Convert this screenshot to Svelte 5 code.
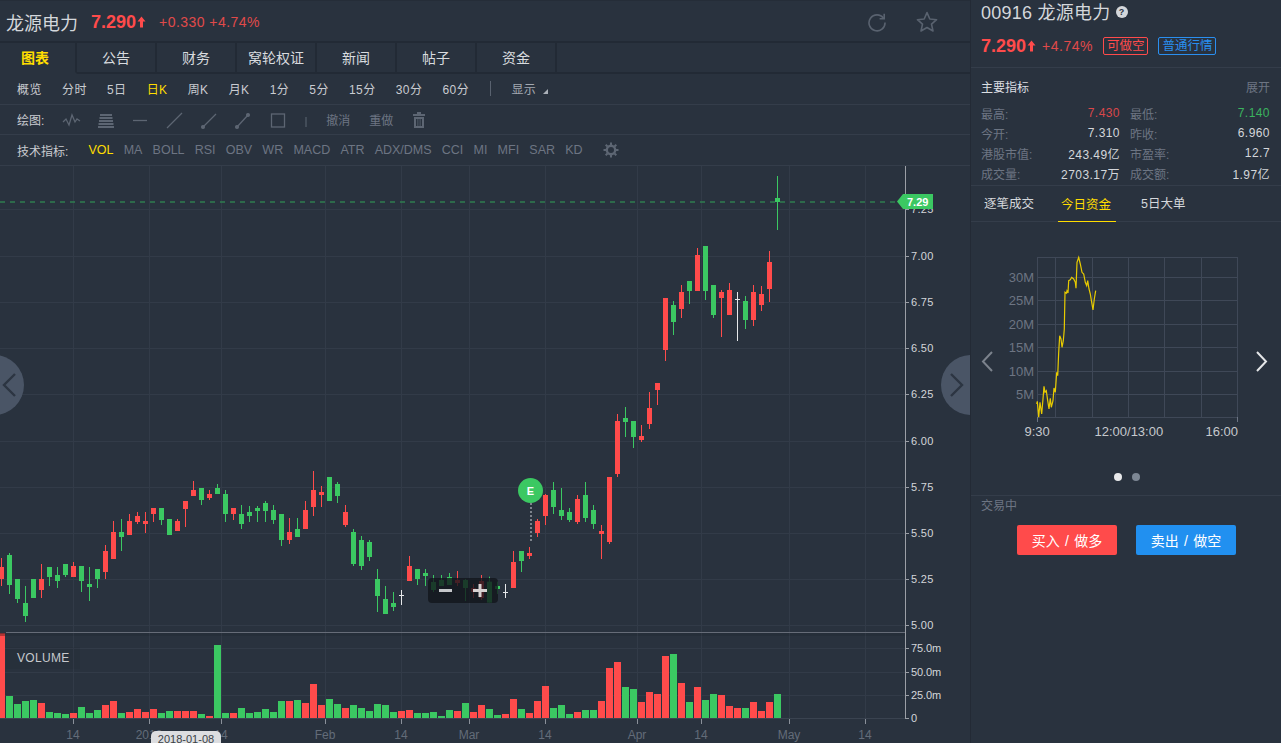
<script lang="ts">
	type Candle = [number, number, number, number, string];

	// high, open/close top, open/close bottom, low, read off the chart in 1/3 px
	const rawA = [
		[354,381,417,438,'r'],[339,345,435,462,'g'],[417,417,477,489,'g'],[438,489,528,546,'g'],[417,417,474,474,'g'],
		[372,417,450,474,'r'],[381,381,411,438,'g'],[381,405,423,444,'g'],[372,372,405,411,'g'],[366,378,411,411,'r'],
		[378,378,423,456,'g'],[381,432,441,483,'g'],[387,387,417,444,'g'],[315,333,396,417,'r'],[243,276,357,357,'r'],
		[237,276,291,333,'g'],[222,243,285,285,'r'],[216,228,246,252,'r'],[216,243,252,279,'r'],[204,204,222,246,'r'],
		[204,204,240,255,'g'],[237,237,285,285,'g'],[237,243,273,273,'r'],[183,183,207,261,'r'],[123,150,168,168,'r'],
		[144,144,180,195,'g'],[150,162,174,180,'r'],[132,144,162,162,'g'],[150,162,222,246,'g'],[204,204,222,240,'r'],
		[195,222,252,267,'g'],[198,216,228,246,'g'],[198,204,213,246,'g'],[183,189,213,246,'g'],[195,210,240,252,'g'],
		[222,222,300,318,'g'],[234,276,300,312,'r'],[234,267,291,291,'g'],[183,210,267,267,'r'],[93,150,201,228,'r'],
		[138,156,165,201,'r'],[111,111,183,183,'g'],[126,132,168,189,'g'],[195,216,255,261,'r'],[267,276,372,378,'g'],
		[288,300,378,390,'g'],[300,306,351,363,'g'],[387,417,468,516,'g'],[438,477,522,522,'g'],[456,489,501,513,'g'],
		[450,465,466,495,'w'],[348,378,423,423,'r'],[387,387,417,435,'g'],[387,399,408,438,'g'],[405,426,450,456,'g'],
		[405,420,438,438,'g'],[399,411,435,435,'g'],[393,420,429,438,'r'],[417,420,444,483,'g'],[432,444,456,474,'r'],
		[405,423,474,480,'r']
	];
	const rawB = [
		[560,575,638,638,'g'],[575,588,597,612,'g'],[582,606,607,624,'w'],[483,516,594,594,'r'],[483,483,513,546,'g'],
		[471,489,498,507,'r'],[387,393,429,441,'r'],[312,315,378,405,'r'],[276,300,351,372,'g'],[294,360,378,390,'g'],
		[354,366,390,396,'g'],[315,327,396,402,'r'],[276,315,384,396,'g'],[345,360,402,417,'g'],[405,423,432,507,'r'],
		[261,261,456,462,'r'],[72,93,252,261,'r'],[51,84,96,141,'g'],[93,93,141,174,'g'],[105,138,150,156,'r'],
		[6,54,102,117,'r'],[-21,-21,0,45,'r']
	];
	const rawC = [
		[384,384,540,573,'r'],[393,405,456,495,'g'],[345,366,417,444,'r'],[333,333,363,402,'g'],[234,255,363,363,'r'],
		[228,228,363,390,'g'],[345,345,435,444,'g'],[360,366,384,501,'r'],[339,360,435,435,'r'],[366,387,388,513,'w'],
		[378,393,450,477,'g'],[345,366,450,468,'r'],[348,372,405,423,'r'],[243,276,357,396,'r'],[18,84,96,180,'g']
	];

	const toPx = (rows: any[], base: number): Candle[] =>
		rows.map((r) => [base + r[0] / 3, base + r[1] / 3, base + r[2] / 3, base + r[3] / 3, r[4]]);
	const candles = [...toPx(rawA, 440), ...toPx(rawB, 390), ...toPx(rawC, 170)];

	// bar tops, same units, 0 = y 625
	const volumes: [number, string][] = [
		[25,'r'],[213,'g'],[237,'g'],[228,'g'],[225,'g'],[234,'r'],[261,'g'],[264,'g'],[267,'g'],[264,'r'],
		[246,'g'],[264,'g'],[255,'g'],[240,'r'],[228,'r'],[264,'g'],[261,'r'],[252,'r'],[261,'r'],[252,'r'],
		[264,'g'],[258,'g'],[258,'r'],[258,'r'],[258,'r'],[267,'g'],[273,'r'],[60,'g'],[264,'g'],[264,'r'],
		[249,'g'],[264,'g'],[261,'g'],[252,'g'],[261,'g'],[228,'g'],[228,'r'],[225,'g'],[234,'r'],[177,'r'],
		[240,'r'],[222,'g'],[237,'g'],[249,'r'],[240,'g'],[249,'g'],[258,'g'],[237,'g'],[240,'g'],[261,'g'],
		[258,'r'],[255,'r'],[264,'g'],[264,'g'],[261,'g'],[273,'g'],[255,'g'],[258,'r'],[234,'g'],[261,'r'],
		[240,'r'],[252,'g'],[270,'g'],[267,'r'],[222,'r'],[252,'g'],[264,'r'],[228,'r'],[183,'r'],[249,'g'],
		[240,'g'],[267,'g'],[261,'r'],[255,'g'],[255,'g'],[228,'r'],[129,'r'],[111,'r'],[186,'g'],[192,'g'],
		[231,'r'],[201,'r'],[207,'r'],[93,'r'],[87,'g'],[174,'r'],[231,'g'],[186,'r'],[225,'g'],[207,'g'],
		[210,'r'],[243,'r'],[249,'r'],[249,'g'],[231,'r'],[258,'r'],[231,'r'],[207,'g']
	];

	const colors: Record<string, string> = { r: '#ff4b4b', g: '#3bc862', w: '#e6e8ea' };

	const gridX = [73, 149, 221, 325, 401, 469, 545, 637, 701, 789, 865];
	const prices = [
		['7.25', 209], ['7.00', 256], ['6.75', 302], ['6.50', 348], ['6.25', 394],
		['6.00', 441], ['5.75', 487], ['5.50', 533], ['5.25', 579], ['5.00', 625]
	] as const;
	const volumeAxis = [['75.0m', 648], ['50.0m', 672], ['25.0m', 695], ['0', 718]] as const;
	const dates = [
		['14', 73], ['2018', 149], ['14', 221], ['Feb', 325], ['14', 401], ['Mar', 469],
		['14', 545], ['Apr', 637], ['14', 701], ['May', 789], ['14', 865]
	] as const;

	const tabs = ['图表', '公告', '财务', '窝轮权证', '新闻', '帖子', '资金'];
	const periods = ['概览', '分时', '5日', '日K', '周K', '月K', '1分', '5分', '15分', '30分', '60分'];
	const indicators = ['VOL', 'MA', 'BOLL', 'RSI', 'OBV', 'WR', 'MACD', 'ATR', 'ADX/DMS', 'CCI', 'MI', 'MFI', 'SAR', 'KD'];

	const stats = [
		['最高:', '7.430', 'up', '最低:', '7.140', 'down'],
		['今开:', '7.310', '', '昨收:', '6.960', ''],
		['港股市值:', '243.49亿', '', '市盈率:', '12.7', ''],
		['成交量:', '2703.17万', '', '成交额:', '1.97亿', '']
	];

	const flowY = [278, 301, 325, 348, 372, 395];
	const flowX = [1054, 1091, 1127, 1163, 1200];
	const flowLabels = [['30M', 278], ['25M', 301], ['20M', 325], ['15M', 348], ['10M', 372], ['5M', 395]] as const;
	const flowRaw = [
		[197,495],[199,487],[203,535],[207,490],[212,525],[216,480],[219,442],[222,460],[226,455],[230,485],[234,510],
		[238,478],[241,505],[246,485],[249,447],[253,460],[257,400],[260,410],[263,340],[266,290],[270,300],[273,325],
		[277,305],[280,270],[282,160],[286,163],[288,155],[291,162],[293,125],[298,122],[302,115],[308,120],[313,130],
		[315,148],[318,70],[323,55],[328,75],[333,100],[338,105],[343,130],[347,140],[350,125],[354,150],[358,165],
		[362,190],[366,213],[370,180],[374,155]
	];
	const flowPath = flowRaw.map(([x, y]) => `${(970 + x / 3).toFixed(1)},${(240 + y / 3).toFixed(1)}`).join(' ');
</script>

{#snippet upArrow()}
	<svg class="arrow" width="9" height="12" viewBox="0 0 9 12"><path d="M4.5 0.5 8.5 5.5H6V11.5H3V5.5H0.5Z" fill="#ff4b4b" /></svg>
{/snippet}

<div class="page">
	<section class="main">
		<header class="head">
			<span class="name">龙源电力</span>
			<span class="price">7.290</span>
			{@render upArrow()}
			<span class="change">+0.330 +4.74%</span>
			<div class="head-tools">
				<svg width="20" height="20" viewBox="0 0 20 20" fill="none" stroke="#59626f" stroke-width="1.6">
					<path d="M16.5 6.2A8 8 0 1 0 18 10.5" />
					<path d="M17.2 1.8V6.8H12.6" />
				</svg>
				<svg width="22" height="22" viewBox="0 0 22 22" fill="none" stroke="#59626f" stroke-width="1.6">
					<path d="M11 1.6 13.8 8 20.6 8.7 15.5 13.2 17 20 11 16.5 5 20 6.5 13.2 1.4 8.7 8.2 8Z" stroke-linejoin="round" />
				</svg>
			</div>
		</header>

		<nav class="tabs">
			{#each tabs as tab, i}
				<div class="tab" class:active={i === 0}>{tab}</div>
			{/each}
			<div class="tab-rest"></div>
		</nav>

		<div class="bar periods">
			{#each periods as p}
				<span class:on={p === '日K'}>{p}</span>
			{/each}
			<i class="vsep"></i>
			<span class="show">显示</span>
			<svg class="corner" width="5" height="5" viewBox="0 0 5 5"><path d="M5 0V5H0Z" fill="#aab0b8" /></svg>
		</div>

		<div class="bar draw">
			<span class="bar-label">绘图:</span>
			<svg class="tools" width="250" height="20" viewBox="0 0 250 20" fill="none" stroke="#5d6673" stroke-width="1.3">
				<path d="M1 12 4 9 7 15 10 5 13 12 15 9 18 11" />
				<path d="M38 5H50M37.5 8H50.5M37 11H51M36.5 14H51.5M36 17H52" stroke-width="1.8" />
				<path d="M71 10.5H85" />
				<path d="M105 18 120 3" />
				<path d="M141 17 154 4" /><circle cx="141" cy="17" r="1.4" fill="#5d6673" />
				<path d="M175 17 186 5" /><circle cx="175" cy="17" r="1.4" fill="#5d6673" /><circle cx="186" cy="5" r="1.4" fill="#5d6673" />
				<rect x="209.5" y="4" width="13" height="13" />
				<path d="M244 7V17" stroke-width="1" />
			</svg>
			<span class="muted-btn undo">撤消</span>
			<span class="muted-btn">重做</span>
			<svg class="trash" width="12" height="16" viewBox="0 0 12 16" fill="#5d6673">
				<path d="M4 0H8V2H12V4H0V2H4ZM1 5H11V16H1ZM3 7V14H4.5V7ZM5.3 7V14H6.7V7ZM7.5 7V14H9V7Z" fill-rule="evenodd" />
			</svg>
		</div>

		<div class="bar inds">
			<span class="bar-label">技术指标:</span>
			{#each indicators as ind}
				<span class="ind" class:on={ind === 'VOL'}>{ind}</span>
			{/each}
			<svg class="gear" width="16" height="16" viewBox="0 0 16 16" fill="none" stroke="#5d6673">
				<circle cx="8" cy="8" r="4.2" stroke-width="2.4" />
				<path d="M8 0.5V3M8 13V15.5M0.5 8H3M13 8H15.5M2.7 2.7 4.5 4.5M11.5 11.5 13.3 13.3M13.3 2.7 11.5 4.5M4.5 11.5 2.7 13.3" stroke-width="2" />
			</svg>
		</div>

		<svg class="chart" width="970" height="577" viewBox="0 166 970 577">
			{#each prices as [, y]}
				<rect x="0" y={y} width="905" height="1" fill="#323b48" />
			{/each}
			{#each [648, 672, 695] as y}
				<rect x="0" y={y} width="905" height="1" fill="#323b48" />
			{/each}
			{#each gridX as x}
				<rect x={x} y="166" width="1" height="552" fill="#323b48" />
				<rect x={x} y="719" width="1" height="5" fill="#8a909a" />
			{/each}

			<rect x="0" y="633" width="905" height="3" fill="#000" opacity="0.08" />
			<rect x="6" y="632" width="899" height="1" fill="#666c78" />
			<rect x="0" y="718" width="905" height="1" fill="#3a4350" />

			<line x1="0" y1="202" x2="897" y2="202" stroke="#2f7d50" stroke-width="1.5" stroke-dasharray="5 5" />

			{#each candles as [hi, top, bot, lo, c], i}
				<rect x={1 + 8 * i} y={hi} width="1" height={lo - hi} fill={colors[c]} />
				<rect x={-1 + 8 * i} y={top} width="5" height={Math.max(bot - top, 1)} fill={colors[c]} />
			{/each}

			{#each volumes as [top, c], i}
				<rect x={-2 + 8 * i} y={625 + top / 3} width="7" height={93 - top / 3} fill={colors[c]} />
			{/each}
			<rect x="0" y="633" width="5" height="3" fill="#000" opacity="0.3" />

			<rect x="6" y="647" width="74" height="22" fill="#000" opacity="0.04" />
			<text class="vol-label" x="17" y="662">VOLUME</text>

			<line x1="531" y1="503" x2="531" y2="543" stroke="#7d838c" stroke-width="2" stroke-dasharray="2 2" />
			<circle cx="530.5" cy="490.5" r="12.5" fill="#3bc862" />
			<text class="e-mark" x="530.5" y="494.5">E</text>

			<rect x="428" y="578" width="70" height="25" rx="4" fill="#11151b" opacity="0.78" />
			<rect x="439" y="589" width="13" height="3" fill="#c4c6c9" />
			<rect x="473" y="589" width="14" height="3" fill="#d8d2d2" />
			<rect x="478.5" y="584" width="3" height="13" fill="#d8d2d2" />

			<rect x="905" y="166" width="1" height="553" fill="#9b9fa6" />
			{#each prices as [label, y]}
				<rect x="905" y={y} width="4" height="1" fill="#9b9fa6" />
				<text class="axis" x="911" y={y + 4}>{label}</text>
			{/each}
			{#each volumeAxis as [label, y]}
				<rect x="905" y={y} width="4" height="1" fill="#9b9fa6" />
				<text class="axis vol" x="911" y={y + 4}>{label}</text>
			{/each}

			<path d="M897 201.5 903 194H933V209H903Z" fill="#3bc862" />
			<text class="tag" x="907" y="206">7.29</text>

			{#each dates as [label, x]}
				<text class="date" x={x} y="739">{label}</text>
			{/each}
			<path d="M151 743V736a5 5 0 0 1 5-5H216a5 5 0 0 1 5 5V743Z" fill="#dcdde0" />
			<text class="tooltip" x="186" y="743">2018-01-08</text>

			<circle cx="-6" cy="385" r="30" fill="#4a5566" />
			<path d="M15 374 4 385 15 396" fill="none" stroke="#2c3542" stroke-width="2.4" />
			<circle cx="971" cy="385" r="30" fill="#4a5566" />
			<path d="M951 374 962 385 951 396" fill="none" stroke="#2c3542" stroke-width="2.4" />
		</svg>
	</section>

	<aside class="side">
		<div class="summary">
			<div class="code">
				<span>00916 龙源电力</span>
				<span class="help">?</span>
			</div>
			<div class="quote">
				<span class="price">7.290</span>
				{@render upArrow()}
				<span class="pct">+4.74%</span>
				<span class="badge short">可做空</span>
				<span class="badge normal">普通行情</span>
			</div>
		</div>

		<div class="metrics">
			<div class="metrics-head">
				<span>主要指标</span>
				<span class="more">展开</span>
			</div>
			<div class="stats">
				{#each stats as [l1, v1, c1, l2, v2, c2]}
					<div class="cell"><span>{l1}</span><b class={c1}>{v1}</b></div>
					<div class="cell"><span>{l2}</span><b class={c2}>{v2}</b></div>
				{/each}
			</div>
		</div>

		<div class="side-tabs">
			<span class="side-tab">逐笔成交</span>
			<span class="side-tab active">今日资金</span>
			<span class="side-tab">5日大单</span>
		</div>

		<svg class="flow" width="311" height="242" viewBox="970 223 311 242">
			<rect x="1036.5" y="258.5" width="200" height="160" fill="none" stroke="#3f4857" />
			{#each flowY as y}
				<line x1="1036" x2="1236" y1={y + 0.5} y2={y + 0.5} stroke="#3f4857" />
			{/each}
			{#each flowX as x}
				<line x1={x + 0.5} x2={x + 0.5} y1="258" y2="418" stroke="#3f4857" />
			{/each}
			<line x1="1036.5" x2="1036.5" y1="418" y2="423" stroke="#6d7583" />
			<line x1="1236.5" x2="1236.5" y1="418" y2="423" stroke="#6d7583" />
			{#each flowLabels as [label, y]}
				<text class="flow-y" x="1033" y={y + 5}>{label}</text>
			{/each}
			<polyline points={flowPath} fill="none" stroke="#e8cb00" stroke-width="1.2" />
			<text class="flow-x" x="1023.5" y="437">9:30</text>
			<text class="flow-x" x="1093.5" y="437">12:00/13:00</text>
			<text class="flow-x" x="1204.5" y="437">16:00</text>
			<path d="M991 353 982 362.5 991 372" fill="none" stroke="#7b828c" stroke-width="2" />
			<path d="M1256 353 1265 362.5 1256 372" fill="none" stroke="#e4e6e8" stroke-width="2" />
		</svg>

		<div class="dots"><i class="dot on"></i><i class="dot"></i></div>

		<div class="status">交易中</div>

		<div class="actions">
			<button class="buy">买入 / 做多</button>
			<button class="sell">卖出 / 做空</button>
		</div>
	</aside>
</div>

<style>
	:global(body) {
		background: #29323e;
	}

	.page {
		display: flex;
		width: 1281px;
		height: 743px;
		overflow: hidden;
		background: #29323e;
		color: #dcdfe3;
		font-family: 'Liberation Sans', 'Noto Sans CJK SC', sans-serif;
		font-size: 12px;
	}

	.main {
		flex: 0 0 970px;
		width: 970px;
		border-right: 1px solid #232a35;
		box-sizing: content-box;
	}

	.head {
		display: flex;
		align-items: center;
		box-sizing: border-box;
		height: 41px;
		padding: 2px 32px 0 6px;
		border-top: 1px solid #252d38;
	}

	.name {
		font-size: 18px;
		color: #d4d7db;
	}

	.price {
		font-size: 18px;
		font-weight: 700;
		color: #ff4b4b;
	}

	.head .price {
		margin-left: 13px;
	}

	.arrow {
		margin-left: 1px;
	}

	.change {
		margin-left: 13px;
		font-size: 14px;
		letter-spacing: 0.45px;
		color: #e04a4a;
	}

	.head-tools {
		display: flex;
		align-items: center;
		gap: 29px;
		margin-left: auto;
	}

	.tabs {
		display: flex;
		height: 33px;
		box-sizing: border-box;
		border-top: 2px solid #222a35;
	}

	.tab {
		display: flex;
		align-items: center;
		justify-content: center;
		box-sizing: border-box;
		width: 80px;
		padding-bottom: 1px;
		border-right: 2px solid #222a35;
		border-bottom: 2px solid #222a35;
		font-size: 14px;
		color: #d8dbdf;
	}

	.tab.active {
		width: 77px;
		border-bottom-color: transparent;
		color: #ffdd00;
		font-weight: 700;
		padding-right: 5px;
	}

	.tab-rest {
		flex: 1;
		border-bottom: 2px solid #222a35;
	}

	.bar {
		display: flex;
		align-items: center;
		box-sizing: border-box;
		padding-left: 17px;
		border-bottom: 1px solid #343d4a;
	}

	.periods {
		height: 31px;
		gap: 20.2px;
		padding-bottom: 1px;
		color: #c9ccd1;
		letter-spacing: 0.4px;
	}

	.periods .on {
		color: #ffdd00;
	}

	.vsep {
		width: 1px;
		height: 15px;
		margin-left: 1px;
		background: #59626f;
	}

	.show {
		color: #a3a8b0;
	}

	.corner {
		margin: 6px 0 0 -13px;
	}

	.draw {
		height: 30px;
		color: #c9ccd1;
	}

	.tools {
		margin-left: 18px;
		flex: none;
	}

	.muted-btn {
		color: #6d7583;
		margin-left: 19px;
	}

	.muted-btn.undo {
		margin-left: 14px;
	}

	.trash {
		margin-left: 20px;
	}

	.inds {
		height: 31px;
	}

	.inds .bar-label {
		margin-right: 15px;
		color: #c9ccd1;
	}

	.ind {
		margin: 0 5.1px;
		font-size: 12.5px;
		color: #6d7583;
	}

	.ind.on {
		color: #ffdd00;
	}

	.gear {
		margin-left: 15px;
	}

	.chart {
		display: block;
	}

	.chart text {
		font-family: 'Liberation Sans', 'Noto Sans CJK SC', sans-serif;
	}

	.vol-label {
		font-size: 12px;
		letter-spacing: 0.3px;
		fill: #c6c9cd;
	}

	.e-mark {
		font-size: 11px;
		font-weight: 700;
		text-anchor: middle;
		fill: #fff;
	}

	.axis {
		font-size: 11px;
		letter-spacing: 0.3px;
		fill: #d4d6da;
	}

	.axis.vol {
		letter-spacing: -0.1px;
	}

	.tag {
		font-size: 11px;
		font-weight: 700;
		fill: #fff;
	}

	.date {
		font-size: 12px;
		text-anchor: middle;
		fill: #636c79;
	}

	.tooltip {
		font-size: 11px;
		text-anchor: middle;
		fill: #3a3f46;
	}

	.side {
		flex: 1;
		min-width: 0;
	}

	.summary {
		height: 68px;
		box-sizing: border-box;
		padding: 0 10px;
		border-bottom: 1px solid #343d4a;
	}

	.code {
		display: flex;
		align-items: center;
		height: 22px;
		font-size: 18px;
		letter-spacing: 0.25px;
		color: #d4d7db;
	}

	.help {
		display: flex;
		align-items: center;
		justify-content: center;
		width: 12px;
		height: 12px;
		margin: 2px 0 0 5px;
		border-radius: 50%;
		background: #d4d7db;
		color: #29323e;
		font-size: 9px;
		font-weight: 700;
	}

	.quote {
		display: flex;
		align-items: center;
		height: 24px;
		margin-top: 12px;
	}

	.pct {
		margin-left: 6px;
		font-size: 14px;
		letter-spacing: 0.5px;
		color: #e04a4a;
	}

	.badge {
		box-sizing: border-box;
		height: 18px;
		line-height: 16px;
		padding: 0 3px;
		border: 1px solid;
		border-radius: 2px;
		font-size: 12.5px;
	}

	.short {
		margin-left: 10px;
		color: #ff4b4b;
		border-color: #ff4b4b;
	}

	.normal {
		margin-left: 10px;
		color: #2a8ff0;
		border-color: #2a8ff0;
	}

	.metrics {
		height: 118px;
		box-sizing: border-box;
		padding: 0 10px;
		border-bottom: 1px solid #343d4a;
	}

	.metrics-head {
		display: flex;
		justify-content: space-between;
		align-items: center;
		height: 37px;
		margin-bottom: -2px;
		padding-right: 1px;
		color: #dcdfe3;
	}

	.more {
		color: #6d7583;
	}

	.stats {
		display: grid;
		grid-template-columns: 139px 140px;
		column-gap: 10px;
		grid-auto-rows: 20px;
	}

	.cell {
		display: flex;
		justify-content: space-between;
		align-items: center;
		color: #6d7583;
	}

	.cell b {
		font-weight: 400;
		letter-spacing: 0.45px;
		color: #d4d7db;
	}

	.cell b.up {
		color: #d9474a;
	}

	.cell b.down {
		color: #3bb35e;
	}

	.side-tabs {
		display: flex;
		height: 36px;
		box-sizing: border-box;
		padding: 0 0 2px 13px;
		border-bottom: 1px solid #343d4a;
		font-size: 12.5px;
		color: #d4d7db;
	}

	.side-tab {
		display: flex;
		align-items: center;
		margin-right: 30px;
	}

	.side-tab.active {
		margin: 0 25px -3px -6px;
		padding: 0 5px 0 3px;
		color: #ffdd00;
		border-bottom: 1px solid #ffdd00;
	}

	.flow {
		display: block;
	}

	.flow text {
		font-family: 'Liberation Sans', 'Noto Sans CJK SC', sans-serif;
	}

	.flow-y {
		font-size: 13px;
		text-anchor: end;
		fill: #6d7583;
	}

	.flow-x {
		font-size: 13px;
		fill: #c6c9cd;
	}

	.dots {
		display: flex;
		justify-content: center;
		gap: 10px;
		height: 32px;
		padding: 9px 0 0 1px;
		box-sizing: border-box;
		border-bottom: 1px solid #343d4a;
	}

	.dot {
		width: 8px;
		height: 8px;
		border-radius: 50%;
		background: #7d8794;
	}

	.dot.on {
		background: #e8e9eb;
	}

	.status {
		padding: 2px 0 0 10px;
		line-height: 17px;
		color: #6d7583;
	}

	.actions {
		display: flex;
		gap: 19px;
		margin: 10px 0 0 46px;
	}

	.actions button {
		width: 100px;
		height: 30px;
		border: 0;
		border-radius: 2px;
		color: #fff;
		word-spacing: 1.5px;
		font: 14px 'Liberation Sans', 'Noto Sans CJK SC', sans-serif;
	}

	.buy {
		background: #ff4b4b;
	}

	.sell {
		background: #2190f0;
	}
</style>
